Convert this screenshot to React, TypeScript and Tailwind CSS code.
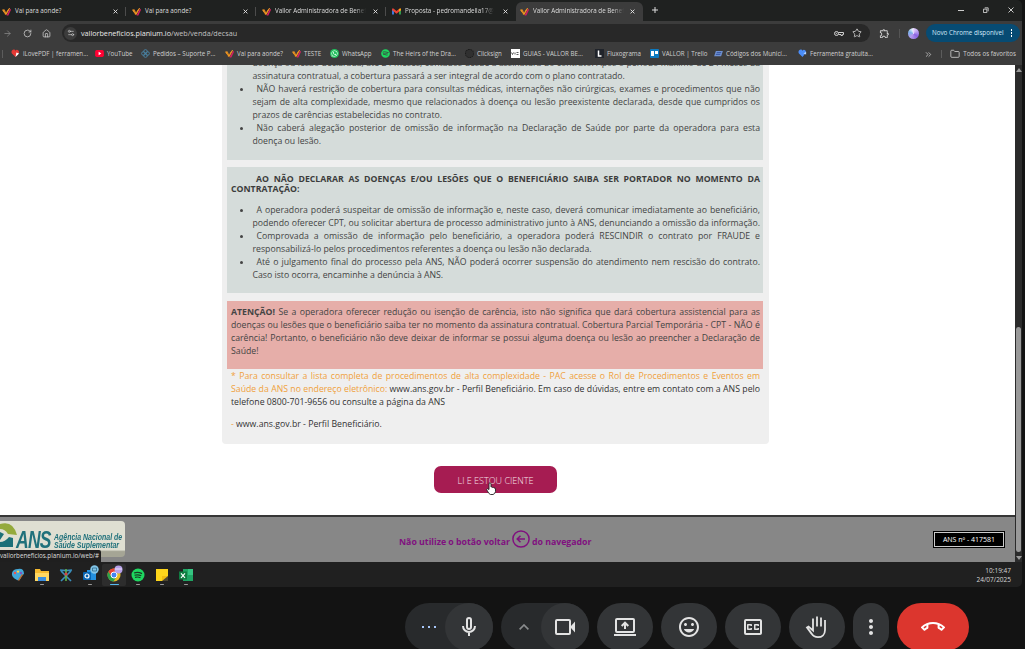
import type { ReactNode } from "react";
import { MdOutlineClosedCaption, MdOutlineInsertEmoticon, MdMoreVert, MdOutlineCallEnd, MdOutlineExtension } from "react-icons/md";
import { ArrowRight, RotateCw, House, Star, Folder, ChevronsRight, Settings2 } from "lucide-react";
import { FaSpotify, FaWhatsapp } from "react-icons/fa";

function VMark() {
  return (
    <svg viewBox="0 0 20 20" className="size-[9px] shrink-0">
      <path d="M0 6 5 5l4 6 7-9 2 1-8 14H7z" fill="#f59a23" />
      <path d="M10 19 18 4l2 2-6 13z" fill="#d91e63" />
      <path d="m5 8 4 4 2-3M3 11l4 5" stroke="#2a2020" strokeWidth="1" fill="none" />
    </svg>
  );
}

function GmailMark() {
  return (
    <svg viewBox="0 0 20 16" className="h-[7px] w-[9px] shrink-0">
      <path d="M0 2v13h4V6z" fill="#4285f4" />
      <path d="M20 2v13h-4V6z" fill="#34a853" />
      <path d="M0 1h3l7 6 7-6h3v4l-10 8L0 5z" fill="#ea4335" />
      <path d="M16 2l4-1v4l-4 3z" fill="#fbbc04" />
    </svg>
  );
}

function Cross() {
  return (
    <svg viewBox="0 0 6 6" className="size-[5px] shrink-0" stroke="#e5e5e5" strokeWidth="1.1">
      <path d="M.7.7 5.3 5.3M5.3.7.7 5.3" />
    </svg>
  );
}

const fade = "[mask-image:linear-gradient(to_right,black_88%,transparent)]";

function Tab({ icon, title, width, faded = false, sep = true }: { icon: ReactNode; title: string; width: string; faded?: boolean; sep?: boolean }) {
  return (
    <div className={`flex h-[19px] shrink-0 items-center pb-px ${width}`}>
      {icon}
      <span className={`ml-1 shrink-0 ${faded ? fade : ""}`}>{title}</span>
      <span className="ml-auto flex shrink-0 items-center">
        <Cross />
        <span className={`ml-[7px] h-[9px] w-px ${sep ? "bg-[#4c4c4c]" : ""}`} />
      </span>
    </div>
  );
}

function Bookmark({ icon, label, width }: { icon: ReactNode; label: string; width: string }) {
  return (
    <div className={`flex shrink-0 items-center gap-[3px] ${width}`}>
      <span className="flex w-[10px] shrink-0 justify-center">{icon}</span>
      <span>{label}</span>
    </div>
  );
}

const badge = "flex size-[9px] items-center justify-center";

const bookmarks: { icon: ReactNode; label: string; width: string }[] = [
  { label: "iLovePDF | ferramen...", width: "w-[84px]", icon: <svg viewBox="0 0 10 10" className="size-[9px]"><path d="M5 9 1 5C-1 1 4-1 5 2c1-2 4-1 4 2z" fill="#e53935" /><path d="m5 9 4-4-3-1z" fill="#fff" /></svg> },
  { label: "YouTube", width: "w-[46px]", icon: <svg viewBox="0 0 10 8" className="h-[7px] w-[9px]"><rect width="10" height="8" rx="2" fill="#f03" /><path d="m4 2 3 2-3 2z" fill="#fff" /></svg> },
  { label: "Pedidos – Suporte P...", width: "w-[84px]", icon: <svg viewBox="0 0 10 10" className="size-[9px]" fill="none" stroke="#4a86a8" strokeWidth="1"><circle cx="5" cy="2.700" r="2" /><circle cx="2.700" cy="5" r="2" /><circle cx="7.300" cy="5" r="2" /><circle cx="5" cy="7.300" r="2" /></svg> },
  { label: "Vai para aonde?", width: "w-[67px]", icon: <VMark /> },
  { label: "TESTE", width: "w-[38px]", icon: <VMark /> },
  { label: "WhatsApp", width: "w-[51px]", icon: <span className={`${badge} rounded-full bg-[#1fc15c] text-white`}><FaWhatsapp size={7} /></span> },
  { label: "The Heirs of the Dra...", width: "w-[84px]", icon: <FaSpotify size={9} color="#1ed760" /> },
  { label: "Clicksign", width: "w-[46px]", icon: <span className="size-[9px] rounded-full border border-dotted border-[#151515] bg-[#303030]" /> },
  { label: "GUIAS - VALLOR BE...", width: "w-[84px]", icon: <span className={`${badge} bg-white`}><svg viewBox="0 0 8 3" className="h-[3px] w-[8px]"><path d="M.5.5 1.500 2.500 2.500.5M4 .5v2M5.500 .5h2M5.500 2.500h2" stroke="#333" strokeWidth=".8" fill="none" /></svg></span> },
  { label: "Fluxograma", width: "w-[55px]", icon: <span className={`${badge} bg-[#20242b]`}><svg viewBox="0 0 9 9" className="size-[9px]"><path d="M3.500 1.500v5.500h3" stroke="#fff" strokeWidth="1.500" fill="none" /></svg></span> },
  { label: "VALLOR | Trello", width: "w-[64px]", icon: <span className="flex size-[9px] items-start justify-center gap-px rounded-[1px] bg-[#0c79bf] pt-[2px]"><i className="h-[5px] w-[3px] bg-white" /><i className="h-[3px] w-[3px] bg-white" /></span> },
  { label: "Códigos dos Municí...", width: "w-[84px]", icon: <svg viewBox="0 0 10 8" className="h-[7px] w-[9px]"><path d="M2 1h8L8 7H0z" fill="#6f90cf" /><path d="M3 3h5M2 5h5" stroke="#2d4c98" /></svg> },
  { label: "Ferramenta gratuita...", width: "w-[90px]", icon: <svg viewBox="0 0 10 10" className="size-[9px]"><path d="M5 9 1 5C-1 1 4-1 5 2c1-2 4-1 4 2z" fill="#4b8df8" /><path d="m6 5 3-2 0 3z" fill="#b7d4ff" /></svg> },
];

function Line({ children, last = false }: { children: ReactNode; last?: boolean }) {
  return <div className={`h-[13px] whitespace-nowrap leading-[13px] ${last ? "" : "[text-align-last:justify]"}`}>{children}</div>;
}

function Bullet({ children }: { children: ReactNode }) {
  return (
    <li className="flex">
      <span className="mt-[5px] mr-[10px] ml-[12.5px] size-[3px] shrink-0 rounded-full bg-[#444]" />
      <div className="w-[507.5px]">{children}</div>
    </li>
  );
}

function TaskIcon({ children, dot = false, active = false }: { children: ReactNode; dot?: boolean; active?: boolean }) {
  return (
    <div className={`flex h-[22px] w-6 shrink-0 flex-col items-center rounded-[2px] pt-[4px] ${active ? "bg-[#2d2d2d]" : ""}`}>
      <svg viewBox="0 0 14 14" className="size-[14px] overflow-visible">{children}</svg>
      {dot && <span className={`mt-[2px] h-[1.5px] rounded-full ${active ? "w-[9px] bg-[#58b9ee]" : "w-[4px] bg-[#999]"}`} />}
    </div>
  );
}

const circle = "flex h-12 w-14 shrink-0 items-center justify-center rounded-[28px] bg-[#333537]";

export default function App() {
  return (
    <div className="flex h-[649px] w-[1025px] flex-col overflow-hidden bg-[#131313] font-['Open_Sans','Noto_Sans',sans-serif]">
      <div className="flex h-[587px] w-[1022px] shrink-0 flex-col overflow-hidden rounded-r-[5px]">
        <div className="flex h-[21px] shrink-0 items-end bg-[#1f2120] text-[6.25px] whitespace-nowrap text-[#dcdcdc]">
          <div className="w-[2px] shrink-0" />
          <Tab icon={<VMark />} title="Vai para aonde?" width="w-[124px]" />
          <div className="w-[6px] shrink-0" />
          <Tab icon={<VMark />} title="Vai para aonde?" width="w-[124px]" />
          <div className="w-[6px] shrink-0" />
          <Tab icon={<VMark />} title="Vallor Administradora de Benef" width="w-[124px]" faded />
          <div className="w-[6px] shrink-0" />
          <Tab icon={<GmailMark />} title="Proposta - pedromandella17@" width="w-[124px]" sep={false} faded />
          <div className="flex h-[19px] w-[127px] shrink-0 items-center rounded-t-[6px] bg-[#3c3c3c] pr-[8px] pb-px pl-[4px]">
            <VMark />
            <span className={`ml-1 shrink-0 ${fade}`}>Vallor Administradora de Benef</span>
            <span className="ml-auto"><Cross /></span>
          </div>
          <svg viewBox="0 0 6 6" className="mb-[8px] ml-[9px] size-[6px]" stroke="#ddd"><path d="M3 0v6M0 3h6" /></svg>
          <div className="mb-[8px] ml-auto flex items-center gap-[19px] pr-[8.5px]">
            <span className="h-px w-[6px] bg-[#ccc]" />
            <svg viewBox="0 0 7 7" className="size-[6px]" fill="none" stroke="#ddd"><path d="M.5 2.5h4v4h-4zM2 1h4v4" /></svg>
            <svg viewBox="0 0 6 6" className="size-[6px]" stroke="#ddd" strokeWidth=".9"><path d="M.5.5l5 5M5.5.5l-5 5" /></svg>
          </div>
        </div>
        <div className="flex h-[22px] shrink-0 items-center bg-[#3c3c3c] pt-[2px] text-[#d0d0d0]">
          <ArrowRight size={9} className="ml-[3px] text-[#888]" />
          <RotateCw size={9} className="ml-[11px]" />
          <House size={9} className="ml-[10px]" />
          <div className="ml-[11px] flex h-[18px] w-[808px] shrink-0 items-center rounded-full bg-[#282828] px-[2px]">
            <span className="flex size-[13px] items-center justify-center rounded-full bg-[#3c3c3c]"><Settings2 size={8} /></span>
            <span className="ml-[4px] text-[7.2px] text-[#e8e8e8]">vallorbeneficios.planium.io<span className="text-[#c2c2c2]">/web/venda/decsau</span></span>
            <svg viewBox="0 0 20 10" className="mr-[8px] ml-auto h-[5px] w-[10px]" fill="none" stroke="currentColor" strokeWidth="2"><circle cx="5" cy="5" r="4" /><circle cx="5" cy="5" r=".7" /><path d="M9 3h10v4h-2v2h-3V7H9" /></svg>
            <Star size={10} className="mr-[6px]" />
          </div>
          <MdOutlineExtension size={11} className="ml-[9px] shrink-0" />
          <span className="ml-[9px] h-[9px] w-px bg-[#555]" />
          <span className="ml-[8px] size-[11px] shrink-0 rounded-full bg-[conic-gradient(#e8d7ff,#8a62e0_35%,#b59aef_60%,#7ab0e8_80%,#fff)]" />
          <div className="ml-[7px] flex h-[18px] w-[94px] shrink-0 items-center rounded-full bg-[#074b73] pl-[6px] text-[6.25px] whitespace-nowrap text-[#d5e9fa]">
            Novo Chrome disponível
            <span className="mr-[8px] ml-auto flex flex-col gap-[1.5px]"><i className="size-[1.5px] bg-white" /><i className="size-[1.5px] bg-white" /><i className="size-[1.5px] bg-white" /></span>
          </div>
        </div>
        <div className="flex h-[22px] shrink-0 items-center bg-[#3c3c3c] text-[6.2px] whitespace-nowrap text-[#d0d0d0]">
          <span className="ml-[2px] h-[8px] w-px shrink-0 bg-[#5c5c5c]" />
          <div className="ml-[7px] flex shrink-0">
            {bookmarks.map((b) => <Bookmark key={b.label} {...b} />)}
          </div>
          <div className="ml-auto flex items-center pr-[6px]">
            <ChevronsRight size={9} />
            <span className="ml-[8px] h-[8px] w-px bg-[#5c5c5c]" />
            <Folder size={10} className="mr-[3px] ml-[8px]" />
            Todos os favoritos
          </div>
        </div>

        <div className="flex h-[497px] shrink-0">
          <main className="flex w-[1015px] shrink-0 flex-col overflow-hidden bg-white">
            <article className="ml-[222px] flex h-[379px] w-[547px] shrink-0 flex-col rounded-b-[4px] bg-[#efefef] px-[5px] text-[8.72px] text-[#444]">
              <div className="mr-px h-[95px] shrink-0 overflow-hidden bg-[#d5dcda]">
                <ul className="-mt-[8px]">
                  <li className="ml-[25.5px] w-[507.5px]">
                    <Line>doença ou lesão declarada, até 24 meses, contados desde a assinatura do contrato. Após o período máximo de 24 meses da</Line>
                    <Line last>assinatura contratual, a cobertura passará a ser integral de acordo com o plano contratado.</Line>
                  </li>
                  <Bullet>
                    <Line><span className="inline-block w-[4px]" />NÃO haverá restrição de cobertura para consultas médicas, internações não cirúrgicas, exames e procedimentos que não</Line>
                    <Line>sejam de alta complexidade, mesmo que relacionados à doença ou lesão preexistente declarada, desde que cumpridos os</Line>
                    <Line last>prazos de carências estabelecidas no contrato.</Line>
                  </Bullet>
                  <Bullet>
                    <Line><span className="inline-block w-[4px]" />Não caberá alegação posterior de omissão de informação na Declaração de Saúde por parte da operadora para esta</Line>
                    <Line last>doença ou lesão.</Line>
                  </Bullet>
                </ul>
              </div>
              <div className="mt-[7px] mr-px h-[126px] shrink-0 bg-[#d5dcda] pt-[6.5px]">
                <h2 className="ml-[4px] w-[529px] leading-[10px] font-bold whitespace-nowrap text-[#3c3c3c]">
                  <div className="pl-[25px] [text-align-last:justify]">AO NÃO DECLARAR AS DOENÇAS E/OU LESÕES QUE O BENEFICIÁRIO SAIBA SER PORTADOR NO MOMENTO DA</div>
                  <div>CONTRATAÇÃO:</div>
                </h2>
                <ul className="mt-[10px]">
                  <Bullet>
                    <Line><span className="inline-block w-[4px]" />A operadora poderá suspeitar de omissão de informação e, neste caso, deverá comunicar imediatamente ao beneficiário,</Line>
                    <Line>podendo oferecer CPT, ou solicitar abertura de processo administrativo junto à ANS, denunciando a omissão da informação.</Line>
                  </Bullet>
                  <Bullet>
                    <Line><span className="inline-block w-[4px]" />Comprovada a omissão de informação pelo beneficiário, a operadora poderá RESCINDIR o contrato por FRAUDE e</Line>
                    <Line last>responsabilizá-lo pelos procedimentos referentes a doença ou lesão não declarada.</Line>
                  </Bullet>
                  <Bullet>
                    <Line><span className="inline-block w-[4px]" />Até o julgamento final do processo pela ANS, NÃO poderá ocorrer suspensão do atendimento nem rescisão do contrato.</Line>
                    <Line last>Caso isto ocorra, encaminhe a denúncia à ANS.</Line>
                  </Bullet>
                </ul>
              </div>
              <div className="mt-[8px] mr-px h-[68px] shrink-0 bg-[#e6aea9] pt-[4.500px] pr-[3px] pl-[4px]">
                <Line><b>ATENÇÃO!</b> Se a operadora oferecer redução ou isenção de carência, isto não significa que dará cobertura assistencial para as</Line>
                <Line>doenças ou lesões que o beneficiário saiba ter no momento da assinatura contratual. Cobertura Parcial Temporária - CPT - NÃO é</Line>
                <Line>carência! Portanto, o beneficiário não deve deixar de informar se possui alguma doença ou lesão ao preencher a Declaração de</Line>
                <Line last>Saúde!</Line>
              </div>
              <div className="pt-[0.5px] pr-[4px] pl-[4px] text-[#333]">
                <div className="text-[#f0a13c]"><Line>* Para consultar a lista completa de procedimentos de alta complexidade - PAC acesse o Rol de Procedimentos e Eventos em</Line></div>
                <Line><span className="text-[#f0a13c]">Saúde da ANS no endereço eletrônico:</span> www.ans.gov.br - Perfil Beneficiário. Em caso de dúvidas, entre em contato com a ANS pelo</Line>
                <Line last>telefone 0800-701-9656 ou consulte a página da ANS</Line>
                <div className="mt-[9px]"><Line last><span className="text-[#f0a13c]">-</span> www.ans.gov.br - Perfil Beneficiário.</Line></div>
              </div>
            </article>
            <button className="relative mt-[22px] ml-[434px] flex h-[27px] w-[123px] shrink-0 items-center justify-center rounded-[7px] bg-[#a61c52] pt-[2px] text-[9px] font-light whitespace-nowrap text-[#f6e3ea]">
              LI E ESTOU CIENTE
              <svg viewBox="0 0 20 26" className="absolute top-[16px] left-[52px] h-[13px] w-[10px]" fill="#fff" stroke="#222" strokeWidth="1.8">
                <path d="M6 15V3q2-3 4 0v7q2-1 3 1 2-1 3 1 3-1 3 2v5q-1 5-5 6H9q-3-1-5-5l-3-5q1-3 5 0z" />
              </svg>
            </button>
            <footer className="mt-auto flex h-[47px] shrink-0 items-start border-t-2 border-[#363636] bg-[#878787]">
              <div className="relative h-[45px] w-[125px] shrink-0">
                <div className="mt-[4px] flex h-[36px] w-[125px] rounded-r-[4px] bg-gradient-to-b from-[#dfdfd2] from-80% to-[#a5a595] to-85%">
                  <svg viewBox="0 0 18 28" className="mt-[1px] h-[28px] w-[18px] shrink-0">
                    <path d="M0 2q13-4 17 11l-9-1Q5 7 0 7z" fill="#94aa3c" />
                    <path d="M0 20q5 0 9-5l4 1v9H0zM0 10l4 2-4 6z" fill="#1c7078" />
                  </svg>
                  <span className="-ml-[2px] w-[38px] shrink-0 origin-left pt-[6px] font-['Liberation_Sans',Arial,sans-serif] text-[24px] leading-[26px] font-bold tracking-[-1px] text-[#20717b] italic [transform:scaleX(.73)]">ANS</span>
                  <span className="w-[67px] shrink-0 origin-left pt-[12px] font-['Liberation_Sans',Arial,sans-serif] text-[8.5px] leading-[8px] font-bold whitespace-nowrap text-[#20717b] italic [transform:scaleX(.82)]">Agência Nacional de<br />Saúde Suplementar</span>
                </div>
                <span className="absolute top-[33px] left-0 flex h-[12px] w-[101px] items-center rounded-tr-[2px] bg-[#1f1f1f] text-[6.25px] whitespace-nowrap text-[#ddd]">vallorbeneficios.planium.io/web/#</span>
              </div>
              <div className="ml-[274px] flex pt-[13px] text-[8.750px] font-bold whitespace-nowrap text-[#80107f]">
                <span className="pt-[6px]">Não utilize o botão voltar</span>
                <svg viewBox="0 0 18 18" className="mx-[2px] size-[18px]" fill="none" stroke="#80107f" strokeWidth="1.5"><circle cx="9" cy="9" r="8.1" /><path d="M13 9H5.5M8.5 5.7 5.2 9l3.3 3.3" /></svg>
                <span className="pt-[6px]">do navegador</span>
              </div>
              <div className="mt-[14px] mr-[10px] ml-auto border border-black bg-black">
                <div className="flex h-[15px] w-[70px] items-center justify-center border border-[#ccc] pt-px text-[7px] text-white">ANS nº - 417581</div>
              </div>
            </footer>
          </main>
          <div className="flex w-[7px] flex-col items-center bg-[#2b2b2b]">
            <svg viewBox="0 0 6 4" className="mt-[3px] h-[4px] w-[6px]"><path d="M0 4 3 0l3 4z" fill="#999" /></svg>
            <span className="mt-[255px] h-[225px] w-[5px] rounded-full bg-[#999]" />
            <svg viewBox="0 0 6 4" className="mt-[4px] h-[4px] w-[6px]"><path d="m0 0 3 4 3-4z" fill="#999" /></svg>
          </div>
        </div>

        <div className="flex h-[25px] shrink-0 items-center bg-[#202020] pl-[6px]">
          <TaskIcon><path d="M7 1q6-1 6 5-2 1-3 3-1 4-4 3Q0 9 1 5t6-4z" fill="#43a9d9" /><circle cx="4" cy="5" r="1.2" fill="#ef5350" /><circle cx="7" cy="3.6" r="1.2" fill="#ffd24a" /><circle cx="10" cy="5" r="1.2" fill="#7e57c2" /><path d="m7 12 4-6 1 1-4 6z" fill="#b96b33" /></TaskIcon>
          <TaskIcon dot><path d="M0 1h5l1 2h8v10H0z" fill="#f5b92f" /><path d="M0 5h14v8H0z" fill="#ffd762" /><path d="M3 9h8v4H3z" fill="#3a8ee0" /></TaskIcon>
          <TaskIcon><path d="M1 2q6 1 12 0M2 13 12 3M12 13 2 3" stroke="#3a8ebb" strokeWidth="1.7" fill="none" /><path d="M7 1v12" stroke="#67b847" strokeWidth="1.5" /><circle cx="7" cy="6" r="1.6" fill="#d34141" /></TaskIcon>
          <TaskIcon dot><rect x="4" y="2" width="9" height="10" fill="#2490df" /><rect x="0" y="4" width="8" height="8" rx="1" fill="#0864b1" /><circle cx="4" cy="8" r="2" fill="none" stroke="#fff" strokeWidth="1.2" /><circle cx="11.5" cy="1.5" r="4.2" fill="#82c5e8" /><path d="M9.500 0h4v3h-4z" fill="none" stroke="#275e80" strokeWidth=".7" /></TaskIcon>
          <TaskIcon dot active><circle cx="7" cy="7" r="6.5" fill="#e5bb24" /><path d="M1.4 3.7A6.5 6.5 0 0 1 13 4.5H7L4 9z" fill="#e94335" /><path d="M1.4 3.7A6.5 6.5 0 0 0 6.5 13.5l3-5H4.4z" fill="#2ba24c" /><circle cx="7" cy="7" r="3" fill="#4285f4" stroke="#fff" /><circle cx="11.5" cy="1.500" r="4" fill="#b7a1ea" /><path d="M8 1h7" stroke="#eee3ff" /></TaskIcon>
          <TaskIcon dot><circle cx="7" cy="7" r="6.5" fill="#1ed760" /><path d="M3 5q4-1.5 8 .6M3.5 7.3q3.5-1.2 6.7.5M4 9.3q3-.8 5.5.5" stroke="#173d23" strokeWidth="1.2" fill="none" /></TaskIcon>
          <TaskIcon dot><path d="M1 1h12v12H1z" fill="#fdd51b" /><path d="M7 13V8h6v5z" fill="#4c4530" /><path d="M7 13V8h6z" fill="#f0bd10" /></TaskIcon>
          <TaskIcon dot><path d="M4 1h10v12H4z" fill="#1fa463" /><path d="M9 1h5v6H9z" fill="#35c481" /><path d="M0 3.5h8v8H0z" fill="#107c41" /><path d="m2 5.3 4 4.5M6 5.3 2 9.8" stroke="#fff" strokeWidth="1.1" /></TaskIcon>
          <div className="mr-[11px] ml-auto text-right text-[6.5px] leading-[9px] text-[#d5d5d5]">10:19:47<br />24/07/2025</div>
        </div>
      </div>

      <div className="mt-[16px] flex shrink-0 gap-2 pl-[405px] text-[#e3e3e3]">
        <div className="flex h-12 w-[88px] shrink-0 rounded-[28px] bg-[#282a2c]">
          <div className="flex w-10 items-center justify-end">
            <span className="mr-[9px] flex gap-[4px]"><i className="size-[2px] bg-[#a8c7fa]" /><i className="size-[2px] bg-[#a8c7fa]" /><i className="size-[2px] bg-[#a8c7fa]" /></span>
          </div>
          <div className="flex w-12 items-center justify-center rounded-full bg-[#333537]">
            <svg viewBox="0 0 24 24" className="size-6" fill="none" stroke="currentColor" strokeWidth="2"><rect x="10" y="3" width="4" height="11" rx="2" /><path d="M6 11a6 6 0 0 0 12 0M12 17v4" /></svg>
          </div>
        </div>
        <div className="flex h-12 w-[88px] shrink-0 rounded-[28px] bg-[#282a2c]">
          <div className="flex w-10 items-center justify-center pl-[6px]">
            <svg viewBox="0 0 10 6" className="h-[6px] w-[10px]" fill="none" stroke="#8b8d8f" strokeWidth="1.6"><path d="m.6 5.4 4.4-4.4 4.4 4.4" /></svg>
          </div>
          <div className="flex w-12 items-center justify-center rounded-full bg-[#333537]">
            <svg viewBox="0 0 24 24" className="size-6"><rect x="3" y="5" width="14" height="14" rx="1" fill="none" stroke="currentColor" strokeWidth="2" /><path d="m18 11 4-4.500v11L18 13z" fill="currentColor" /></svg>
          </div>
        </div>
        <div className={circle}>
          <svg viewBox="0 0 24 24" className="size-6" fill="none" stroke="currentColor" strokeWidth="2"><rect x="3" y="4" width="18" height="13" rx="1" /><path d="M1 20h22M12 14V8M8.700 11 12 7.700l3.300 3.300" /></svg>
        </div>
        <div className={circle}><MdOutlineInsertEmoticon size={24} /></div>
        <div className={circle}><MdOutlineClosedCaption size={24} /></div>
        <div className={circle}>
          <svg viewBox="0 0 24 24" className="size-6" fill="none" stroke="currentColor" strokeWidth="1.8"><path d="M12 11.500V1.500M16 11.500V2.500M20 5v10c0 4.500-3 7.200-7 7.200-3 0-5-1.200-6.500-3.600L2 12.400l1.500-.9L8 15.500V3.500" /></svg>
        </div>
        <div className="flex h-12 w-9 shrink-0 items-center justify-center rounded-[28px] bg-[#333537]"><MdMoreVert size={24} /></div>
        <div className="flex h-12 w-[72px] shrink-0 items-center justify-center rounded-[28px] bg-[#dc362e] text-white"><MdOutlineCallEnd size={24} /></div>
      </div>
    </div>
  );
}
